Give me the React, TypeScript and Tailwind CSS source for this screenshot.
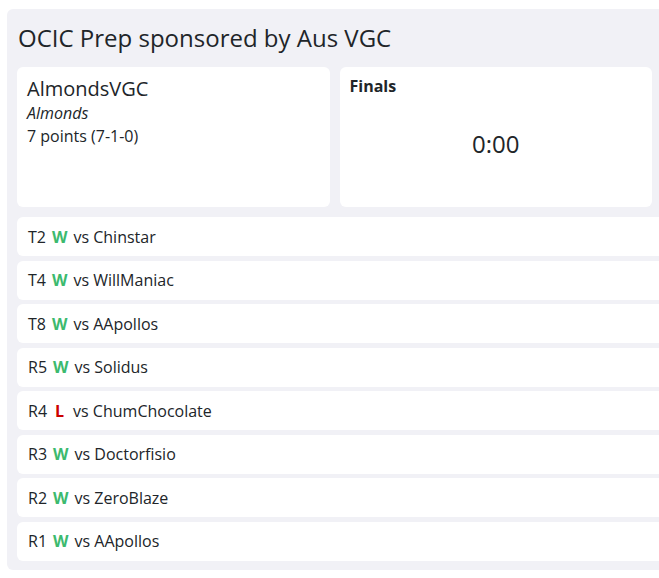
const matches = [
  { round: 'T2', result: 'W', opponent: 'Chinstar' },
  { round: 'T4', result: 'W', opponent: 'WillManiac' },
  { round: 'T8', result: 'W', opponent: 'AApollos' },
  { round: 'R5', result: 'W', opponent: 'Solidus' },
  { round: 'R4', result: 'L', opponent: 'ChumChocolate' },
  { round: 'R3', result: 'W', opponent: 'Doctorfisio' },
  { round: 'R2', result: 'W', opponent: 'ZeroBlaze' },
  { round: 'R1', result: 'W', opponent: 'AApollos' },
];

export default function App() {
  return (
    <div className="min-h-screen bg-white overflow-hidden font-['Open_Sans',sans-serif] text-[#212529]">
      <div className="ml-[7px] mt-[9px] w-[700px] rounded-md bg-[#f1f1f6] px-[10px] pt-[13px] pb-[9px]">
        {/* Header */}
        <h1 className="text-[24px] leading-[32px] mb-[13px] pl-[1px]">OCIC Prep sponsored by Aus VGC</h1>

        {/* Player + timer */}
        <div className="grid grid-cols-2 gap-[10px] w-[635px]">
          <div className="h-[140px] rounded-md bg-white px-[10px] pt-[8px]">
            <div className="text-[20px] leading-[28px]">AlmondsVGC</div>
            <div className="text-[16px] leading-[24px] italic -mt-[2px]">Almonds</div>
            <div className="text-[16px] leading-[22px]">7 points (7-1-0)</div>
          </div>
          <div className="h-[140px] rounded-md bg-white px-[10px] pt-[8px] flex flex-col">
            <div className="text-[16px] leading-[22px] font-bold">Finals</div>
            <div className="text-[24px] leading-[32px] text-center mt-[31px]">0:00</div>
          </div>
        </div>

        {/* Match history */}
        <div className="mt-[10px] flex flex-col gap-[4.5px]">
          {matches.map((m, i) => (
            <div key={i} className="h-[39px] rounded-md bg-white px-[11px] flex items-center text-[16px]">
              <span>{m.round}</span>
              <span
                className={`font-bold ${m.result === 'W' ? 'ml-[6px] text-[#3cba6e]' : 'ml-[8px] mr-[3px] text-[#cc0000]'}`}
              >
                {m.result}
              </span>
              <span className="ml-[6px]">vs {m.opponent}</span>
            </div>
          ))}
        </div>
      </div>
    </div>
  );
}
